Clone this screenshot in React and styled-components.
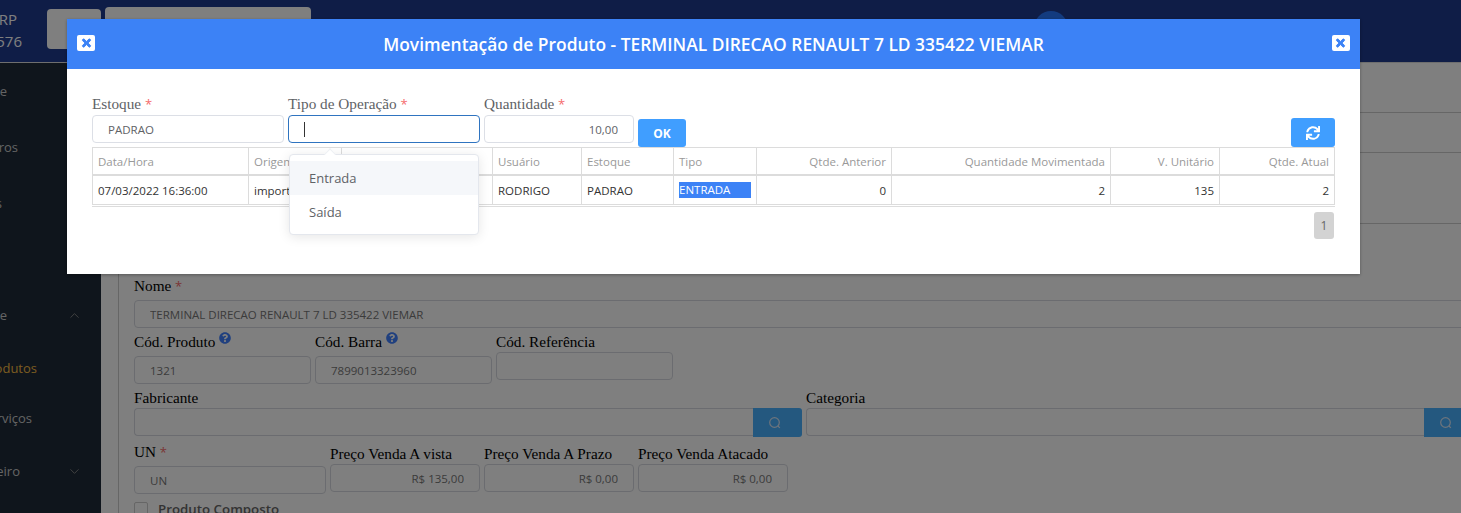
import styled, { createGlobalStyle } from 'styled-components';
import { FaTimes, FaSync, FaQuestionCircle } from 'react-icons/fa';
import { ChevronUp, ChevronDown } from 'lucide-react';

const GlobalStyle = createGlobalStyle`
    * { box-sizing: border-box; }
    html, body { margin: 0; padding: 0; background: #fff; }
    body { font-family: "Open Sans", "Liberation Sans", sans-serif; }
`;

const menu = [
    { word: 'Painel de Controle', end: 7, height: 56 },
    { word: 'Cadastros', end: 18, height: 56 },
    { word: 'Relatórios', end: 2, height: 56 },
    { word: '', end: 0, height: 56 },
    { word: 'Estoque', end: 7, height: 56, chevron: 'up' },
    { word: 'Produtos', end: 37, height: 50, active: true },
    { word: 'Serviços', end: 32, height: 50 },
    { word: 'Financeiro', end: 20, height: 56, chevron: 'down' },
];

const columns = [
    { title: 'Data/Hora', width: 156, value: '07/03/2022 16:36:00' },
    { title: 'Origem', width: 93, value: 'importação' },
    { title: '', width: 151, value: '' },
    { title: 'Usuário', width: 89, value: 'RODRIGO' },
    { title: 'Estoque', width: 92, value: 'PADRAO' },
    { title: 'Tipo', width: 83, value: 'ENTRADA', selected: true },
    { title: 'Qtde. Anterior', width: 135, value: '0', right: true },
    { title: 'Quantidade Movimentada', width: 219, value: '2', right: true },
    { title: 'V. Unitário', width: 109, value: '135', right: true },
    { title: 'Qtde. Atual', width: 115, value: '2', right: true },
];

const SearchIcon = () => (
    <svg width="14" height="14" viewBox="0 0 14 14" fill="none" stroke="currentColor" strokeWidth="1.2">
        <circle cx="6.5" cy="6.5" r="4.8" />
        <path d="M10 10l1.8 1.8" />
    </svg>
);

export default function App() {
    return (
        <>
            <GlobalStyle />
            <Page>
                <Header>
                    <Brand>
                        <BrandName>ERP</BrandName>
                        <span>1576</span>
                    </Brand>
                    <HeaderButton $width={54} $height={40} $top={9} />
                    <HeaderButton $width={206} $height={40} $top={7} />
                    <Avatar />
                </Header>
                <Body>
                    <Sidebar>
                        {menu.map((item, i) => (
                            <MenuItem key={i} $height={item.height} $active={item.active}>
                                <MenuLabel $end={item.end}>{item.word}</MenuLabel>
                                {item.chevron === 'up' && <ChevronUp size={15} strokeWidth={1.5} />}
                                {item.chevron === 'down' && <ChevronDown size={15} strokeWidth={1.5} />}
                            </MenuItem>
                        ))}
                    </Sidebar>
                    <Main>
                        <Card>
                            <TopBar $height={50} />
                            <TopBar $height={40} />
                            <TopBar $height={71} />
                            <ProductForm>
                                <FormRow>
                                    <FormField $width={1339}>
                                        <FormLabel $height={22} $line={16}>Nome <Star>*</Star></FormLabel>
                                        <PageInput readOnly value="TERMINAL DIRECAO RENAULT 7 LD 335422 VIEMAR" />
                                    </FormField>
                                </FormRow>
                                <FormRow>
                                    <FormField $width={177}>
                                        <FormLabel $height={24} $line={20}>Cód. Produto <HelpIcon /></FormLabel>
                                        <PageInput readOnly value="1321" />
                                    </FormField>
                                    <FormField $width={177}>
                                        <FormLabel $height={24} $line={20}>Cód. Barra <HelpIcon /></FormLabel>
                                        <PageInput readOnly value="7899013323960" />
                                    </FormField>
                                    <FormField $width={177}>
                                        <FormLabel $height={20} $line={20}>Cód. Referência</FormLabel>
                                        <PageInput readOnly value="" />
                                    </FormField>
                                </FormRow>
                                <FormRow>
                                    <FormField $width={668}>
                                        <FormLabel $height={20} $line={20}>Fabricante</FormLabel>
                                        <SearchGroup>
                                            <PageInput readOnly value="" />
                                            <SearchButton><SearchIcon /></SearchButton>
                                        </SearchGroup>
                                    </FormField>
                                    <FormField $width={667}>
                                        <FormLabel $height={20} $line={20}>Categoria</FormLabel>
                                        <SearchGroup>
                                            <PageInput readOnly value="" />
                                            <SearchButton><SearchIcon /></SearchButton>
                                        </SearchGroup>
                                    </FormField>
                                </FormRow>
                                <FormRow>
                                    <FormField $width={192}>
                                        <FormLabel $height={25} $line={22}>UN <Star>*</Star></FormLabel>
                                        <PageInput readOnly value="UN" />
                                    </FormField>
                                    <FormField $width={150}>
                                        <FormLabel $height={23} $line={26}>Preço Venda A vista</FormLabel>
                                        <PageInput readOnly $right value="R$ 135,00" />
                                    </FormField>
                                    <FormField $width={150}>
                                        <FormLabel $height={23} $line={26}>Preço Venda A Prazo</FormLabel>
                                        <PageInput readOnly $right value="R$ 0,00" />
                                    </FormField>
                                    <FormField $width={150}>
                                        <FormLabel $height={23} $line={26}>Preço Venda Atacado</FormLabel>
                                        <PageInput readOnly $right value="R$ 0,00" />
                                    </FormField>
                                </FormRow>
                                <CheckRow>
                                    <CheckBox />
                                    <span>Produto Composto</span>
                                </CheckRow>
                            </ProductForm>
                        </Card>
                    </Main>
                </Body>

                <Overlay>
                    <Modal>
                        <ModalHeader>
                            <CloseButton><CloseIcon /></CloseButton>
                            <ModalTitle>Movimentação de Produto - TERMINAL DIRECAO RENAULT 7 LD 335422 VIEMAR</ModalTitle>
                            <CloseButton><CloseIcon /></CloseButton>
                        </ModalHeader>
                        <ModalBody>
                            <Toolbar>
                                <ToolField $width={192}>
                                    <ToolLabel>Estoque <Star>*</Star></ToolLabel>
                                    <ToolInput readOnly value="PADRAO" />
                                </ToolField>
                                <ToolField $width={192}>
                                    <ToolLabel>Tipo de Operação <Star>*</Star></ToolLabel>
                                    <ToolInput readOnly value="" $focused />
                                    <Caret />
                                    <Dropdown>
                                        <DropdownArrow />
                                        <DropdownItem $hover>Entrada</DropdownItem>
                                        <DropdownItem>Saída</DropdownItem>
                                    </Dropdown>
                                </ToolField>
                                <ToolField $width={150}>
                                    <ToolLabel>Quantidade <Star>*</Star></ToolLabel>
                                    <ToolInput readOnly value="10,00" $right />
                                </ToolField>
                                <OkButton>OK</OkButton>
                                <RefreshButton><FaSync size={14} /></RefreshButton>
                            </Toolbar>
                            <TableWrap>
                                <MovesTable>
                                    <colgroup>
                                        {columns.map((col, i) => <col key={i} width={col.width} />)}
                                    </colgroup>
                                    <thead>
                                        <tr>
                                            {columns.map((col, i) => (
                                                <HeadCell key={i} $right={col.right}>{col.title}</HeadCell>
                                            ))}
                                        </tr>
                                    </thead>
                                    <tbody>
                                        <tr>
                                            {columns.map((col, i) => (
                                                <BodyCell key={i} $right={col.right}>
                                                    {col.selected ? <Selected>{col.value}</Selected> : col.value}
                                                </BodyCell>
                                            ))}
                                        </tr>
                                    </tbody>
                                </MovesTable>
                            </TableWrap>
                            <Pagination>
                                <PageNumber>1</PageNumber>
                            </Pagination>
                        </ModalBody>
                    </Modal>
                </Overlay>
            </Page>
        </>
    );
}

const Page = styled.div`
    position: relative;
    width: 1461px;
    height: 513px;
    overflow: hidden;
    background: #fff;
`;

const Header = styled.header`
    display: flex;
    align-items: flex-start;
    height: 63px;
    background: #1e3b8f;
    border-bottom: 1px solid #ddd;
`;

const Brand = styled.div`
    display: flex;
    flex-direction: column;
    align-items: flex-end;
    gap: 4px;
    width: 22px;
    padding-top: 10px;
    margin-right: 25px;
    font-size: 15px;
    line-height: 18px;
    color: #fff;
    overflow: hidden;
    & > span { white-space: nowrap; }
`;

const BrandName = styled.span`
    margin-right: 5px;
`;

const HeaderButton = styled.div`
    width: ${p => p.$width}px;
    height: ${p => p.$height}px;
    margin-top: ${p => p.$top}px;
    margin-right: 4px;
    background: #fff;
    border-radius: 4px;
`;

const Avatar = styled.div`
    width: 34px;
    height: 34px;
    margin: 11px 0 0 719px;
    border-radius: 50%;
    background: #2776ff;
`;

const Body = styled.div`
    display: flex;
    height: 450px;
`;

const Sidebar = styled.nav`
    flex: 0 0 101px;
    padding-top: 0;
    background: #1e2a38;
    overflow: hidden;
`;

const MenuItem = styled.div`
    display: flex;
    align-items: center;
    height: ${p => p.$height}px;
    color: ${p => p.$active ? '#f5b942' : '#c8c8c8'};
    font-size: 13px;
    & > svg {
        margin-left: auto;
        margin-right: 19px;
        color: #888;
    }
`;

const MenuLabel = styled.span`
    display: flex;
    justify-content: flex-end;
    width: ${p => p.$end}px;
    overflow: hidden;
    white-space: nowrap;
`;

const Main = styled.main`
    flex: 1;
    min-width: 0;
    padding-left: 17px;
    background: #fff;
    overflow: hidden;
`;

const Card = styled.section`
    height: 100%;
    border-left: 1px solid #ccc;
`;

const TopBar = styled.div`
    height: ${p => p.$height}px;
    border-bottom: 1px solid #ccc;
`;

const ProductForm = styled.form`
    display: flex;
    flex-direction: column;
    gap: 4px;
    width: 1354px;
    padding: 54px 0 0 15px;
`;

const FormRow = styled.div`
    display: flex;
    align-items: flex-start;
    gap: 4px;
`;

const FormField = styled.div`
    flex: 0 0 ${p => p.$width}px;
    width: ${p => p.$width}px;
`;

const FormLabel = styled.label`
    display: block;
    height: ${p => p.$height}px;
    line-height: ${p => p.$line}px;
    font-family: "Liberation Serif", serif;
    font-size: 15.25px;
    color: #000;
    white-space: nowrap;
    & > svg {
        vertical-align: 3px;
        color: #4080ff;
        font-size: 12px;
    }
`;

const Star = styled.span`
    font-family: "Open Sans", sans-serif;
    font-size: 13px;
    color: #f56c6c;
`;

const HelpIcon = styled(FaQuestionCircle)``;

const CloseIcon = styled(FaTimes)`
    width: 11px;
    height: 12px;
    stroke: currentColor;
    stroke-width: 40px;
`;

const PageInput = styled.input`
    display: block;
    width: 100%;
    height: 28px;
    padding: 0 15px;
    border: 1px solid #d6d9e0;
    border-radius: 4px;
    background: #fff;
    outline: none;
    font-family: "Open Sans", sans-serif;
    font-size: 11.5px;
    color: #777;
    text-align: ${p => p.$right ? 'right' : 'left'};
`;

const SearchGroup = styled.div`
    display: flex;
    ${PageInput} {
        flex: 1;
        min-width: 0;
        border-right: none;
        border-radius: 4px 0 0 4px;
    }
`;

const SearchButton = styled.div`
    display: flex;
    flex: 0 0 49px;
    align-items: center;
    justify-content: center;
    height: 29px;
    padding-right: 5px;
    background: #48b0ff;
    border-radius: 0 3px 3px 0;
    color: #dce9f8;
`;

const CheckRow = styled.div`
    display: flex;
    align-items: center;
    gap: 10px;
    margin-top: 2px;
    font-family: "Open Sans", sans-serif;
    font-size: 13.3px;
    font-weight: 600;
    color: #666;
`;

const CheckBox = styled.div`
    width: 14px;
    height: 14px;
    border: 1px solid #ccc;
    border-radius: 2px;
`;

const Overlay = styled.div`
    position: absolute;
    inset: 0;
    padding: 19px 101px 0 67px;
    background: rgba(0, 0, 0, 0.5);
`;

const Modal = styled.div`
    height: 255px;
    background: #fff;
    box-shadow: 0 1px 3px rgba(0, 0, 0, 0.3);
`;

const ModalHeader = styled.div`
    display: flex;
    align-items: center;
    justify-content: space-between;
    height: 50px;
    padding: 0 10px;
    background: #3c82f6;
`;

const ModalTitle = styled.h2`
    margin: 0;
    font-size: 17.4px;
    font-weight: 600;
    color: #fff;
    white-space: nowrap;
`;

const CloseButton = styled.div`
    display: flex;
    align-items: center;
    justify-content: center;
    width: 18px;
    height: 16px;
    margin-top: -2px;
    border-radius: 2px;
    background: #fff;
    color: #3c82f6;
`;

const ModalBody = styled.div`
    padding: 27px 25px 0;
`;

const Toolbar = styled.div`
    display: flex;
    align-items: flex-start;
    gap: 4px;
`;

const ToolField = styled.div`
    position: relative;
    flex: 0 0 ${p => p.$width}px;
`;

const ToolLabel = styled.label`
    display: block;
    height: 19px;
    font-family: "Liberation Serif", serif;
    font-size: 15.25px;
    line-height: 16px;
    color: #606266;
`;

const ToolInput = styled.input`
    display: block;
    width: 100%;
    height: 28px;
    padding: 0 15px;
    border: 1px solid ${p => p.$focused ? '#2f74c0' : '#dcdfe6'};
    border-radius: 4px;
    outline: none;
    font-family: "Open Sans", sans-serif;
    font-size: 11.5px;
    color: #606266;
    text-align: ${p => p.$right ? 'right' : 'left'};
`;

const Caret = styled.span`
    position: absolute;
    left: 16px;
    top: 26px;
    width: 1px;
    height: 15px;
    background: #333;
`;

const Dropdown = styled.div`
    position: absolute;
    left: 1px;
    top: 58px;
    z-index: 2;
    width: 190px;
    height: 81px;
    padding: 6px 0;
    background: #fff;
    border: 1px solid #e4e7ed;
    border-radius: 4px;
    box-shadow: 0 2px 12px rgba(0, 0, 0, 0.1);
`;

const DropdownArrow = styled.span`
    position: absolute;
    left: 36px;
    top: -5px;
    width: 8px;
    height: 8px;
    background: #fff;
    border-top: 1px solid #eef0f4;
    border-left: 1px solid #eef0f4;
    transform: rotate(45deg);
`;

const DropdownItem = styled.div`
    height: 34px;
    padding-left: 19px;
    background: ${p => p.$hover ? '#f5f7fa' : '#fff'};
    font-size: 13px;
    line-height: 34px;
    color: #606266;
`;

const OkButton = styled.button`
    width: 48px;
    height: 28px;
    margin-top: 23px;
    padding: 0;
    border: none;
    border-radius: 3px;
    background: #409eff;
    font-family: "Open Sans", sans-serif;
    font-size: 12px;
    font-weight: 700;
    color: #fff;
`;

const RefreshButton = styled.button`
    display: flex;
    align-items: center;
    justify-content: center;
    width: 44px;
    height: 29px;
    margin: 22px 0 0 auto;
    padding: 0;
    border: none;
    border-radius: 3px;
    background: #409eff;
    color: #fff;
`;

const TableWrap = styled.div`
    padding-bottom: 1px;
    border-bottom: 1px solid #dcdcdc;
`;

const MovesTable = styled.table`
    width: 1243px;
    table-layout: fixed;
    border-collapse: separate;
    border-spacing: 0;
    border-top: 1px solid #dcdcdc;
    border-left: 1px solid #dcdcdc;
    font-size: 11.5px;
`;

const HeadCell = styled.th`
    height: 28px;
    padding: 0 5px;
    border-right: 1px solid #dcdcdc;
    border-bottom: 2px solid #dcdcdc;
    font-weight: 400;
    color: #999;
    text-align: ${p => p.$right ? 'right' : 'left'};
    white-space: nowrap;
    overflow: hidden;
`;

const BodyCell = styled.td`
    height: 29px;
    padding: 0 5px;
    border-right: 1px solid #dcdcdc;
    border-bottom: 1px solid #dcdcdc;
    color: #333;
    text-align: ${p => p.$right ? 'right' : 'left'};
    white-space: nowrap;
    overflow: hidden;
`;

const Selected = styled.span`
    display: block;
    height: 16px;
    line-height: 16px;
    background: #3c82f6;
    color: #fff;
`;

const Pagination = styled.div`
    display: flex;
    justify-content: flex-end;
    padding: 5px 1px 0 0;
`;

const PageNumber = styled.span`
    width: 20px;
    height: 27px;
    border-radius: 3px;
    background: #d3d3d3;
    font-size: 12px;
    line-height: 27px;
    text-align: center;
    color: #666;
`;
